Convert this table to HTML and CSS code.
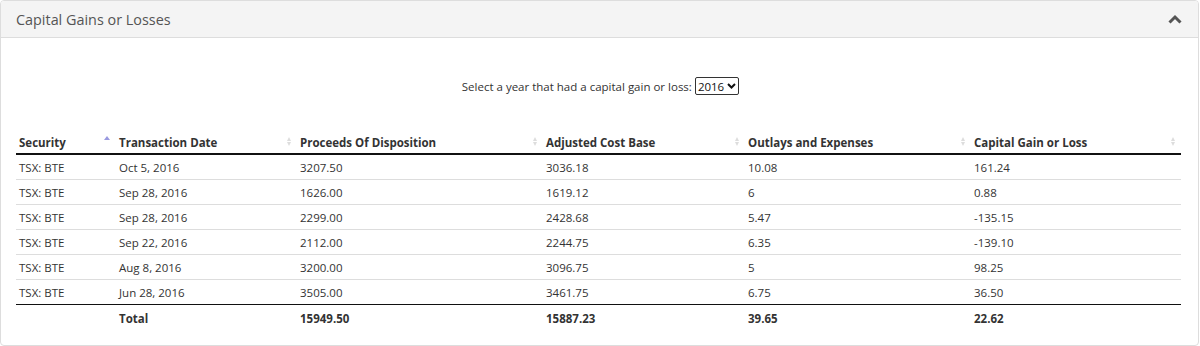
FILE: index.html
```html
<!DOCTYPE html>
<html>
<head>
<meta charset="utf-8">
<link rel="stylesheet" href="styles.css">
</head>
<body>
<div class="panel">
  <div class="panel-heading">
    <h3 class="panel-title">Capital Gains or Losses</h3>
    <svg class="chevron" width="14" height="10" viewBox="0 0 14 10"><path d="M1.5 8.5 L7 3 L12.5 8.5" fill="none" stroke="#555" stroke-width="3"/></svg>
  </div>
  <div class="panel-body">
    <div class="year-select">
      <label>Select a year that had a capital gain or loss:</label>
      <span class="select"><span>2016</span><svg width="9" height="6" viewBox="0 0 9 6"><path d="M1 1 L4.5 4.5 L8 1" fill="none" stroke="#111" stroke-width="2"/></svg></span>
    </div>
    <table class="gains">
      <colgroup>
        <col style="width:100px"><col style="width:181px"><col style="width:246px"><col style="width:202px"><col style="width:226px"><col style="width:210px">
      </colgroup>
      <thead>
        <tr>
          <th class="sort-asc">Security</th>
          <th class="sort">Transaction Date</th>
          <th class="sort">Proceeds Of Disposition</th>
          <th class="sort">Adjusted Cost Base</th>
          <th class="sort">Outlays and Expenses</th>
          <th class="sort">Capital Gain or Loss</th>
        </tr>
      </thead>
      <tbody>
        <tr><td>TSX: BTE</td><td>Oct 5, 2016</td><td>3207.50</td><td>3036.18</td><td>10.08</td><td>161.24</td></tr>
        <tr><td>TSX: BTE</td><td>Sep 28, 2016</td><td>1626.00</td><td>1619.12</td><td>6</td><td>0.88</td></tr>
        <tr><td>TSX: BTE</td><td>Sep 28, 2016</td><td>2299.00</td><td>2428.68</td><td>5.47</td><td>-135.15</td></tr>
        <tr><td>TSX: BTE</td><td>Sep 22, 2016</td><td>2112.00</td><td>2244.75</td><td>6.35</td><td>-139.10</td></tr>
        <tr><td>TSX: BTE</td><td>Aug 8, 2016</td><td>3200.00</td><td>3096.75</td><td>5</td><td>98.25</td></tr>
        <tr><td>TSX: BTE</td><td>Jun 28, 2016</td><td>3505.00</td><td>3461.75</td><td>6.75</td><td>36.50</td></tr>
      </tbody>
      <tfoot>
        <tr><th></th><th>Total</th><th>15949.50</th><th>15887.23</th><th>39.65</th><th>22.62</th></tr>
      </tfoot>
    </table>
  </div>
</div>
</body>
</html>
```

FILE: styles.css
```css
html, body {
  margin: 0;
  padding: 0;
  background: #fff;
}
body {
  font-family: "Open Sans", "Noto Sans", sans-serif;
  font-size: 11.5px;
  color: #333;
}
.panel {
  width: 1197px;
  height: 344px;
  border: 1px solid #ddd;
  border-radius: 4px;
  box-sizing: content-box;
  overflow: hidden;
}
.panel-heading {
  height: 36px;
  background: #f4f4f4;
  border-bottom: 1px solid #ddd;
  display: flex;
  align-items: center;
  justify-content: space-between;
  padding: 0 15px 0 15px;
}
.panel-title {
  margin: 0;
  font-size: 14.4px;
  font-weight: normal;
  color: #555;
}
.chevron {
  margin-right: 1px;
  margin-top: -1px;
}
.panel-body {
  padding: 39px 15px 0 15px;
}
.year-select {
  display: flex;
  justify-content: center;
  align-items: center;
  gap: 3px;
  height: 18px;
  padding-left: 2px;
}
.select {
  display: inline-flex;
  align-items: center;
  gap: 3px;
  height: 16px;
  border: 1px solid #333;
  border-radius: 2px;
  padding: 0 2px 0 2px;
  color: #111;
}
.gains {
  margin-top: 36px;
  border-collapse: collapse;
  table-layout: fixed;
  width: 1165px;
}
.gains th, .gains td {
  text-align: left;
  padding: 0 3px;
  height: 24px;
  white-space: nowrap;
}
.gains thead th {
  font-weight: bold;
  border-bottom: 2px solid #111;
  position: relative;
  height: 22px;
}
.gains tbody td {
  border-bottom: 1px solid #ddd;
}
.gains tbody tr:last-child td {
  border-bottom: 1px solid #111;
}
.gains tfoot th {
  font-weight: bold;
  height: 26px;
}
.gains thead th.sort-asc::after {
  content: "";
  position: absolute;
  right: 6px;
  top: 5px;
  border-left: 3px solid transparent;
  border-right: 3px solid transparent;
  border-bottom: 4px solid #9a9ae0;
}
.gains thead th.sort::before {
  content: "";
  position: absolute;
  right: 6px;
  top: 6px;
  border-left: 2.5px solid transparent;
  border-right: 2.5px solid transparent;
  border-bottom: 4px solid #ddd;
}
.gains thead th.sort::after {
  content: "";
  position: absolute;
  right: 6px;
  top: 11px;
  border-left: 2.5px solid transparent;
  border-right: 2.5px solid transparent;
  border-top: 4px solid #ddd;
}
```
